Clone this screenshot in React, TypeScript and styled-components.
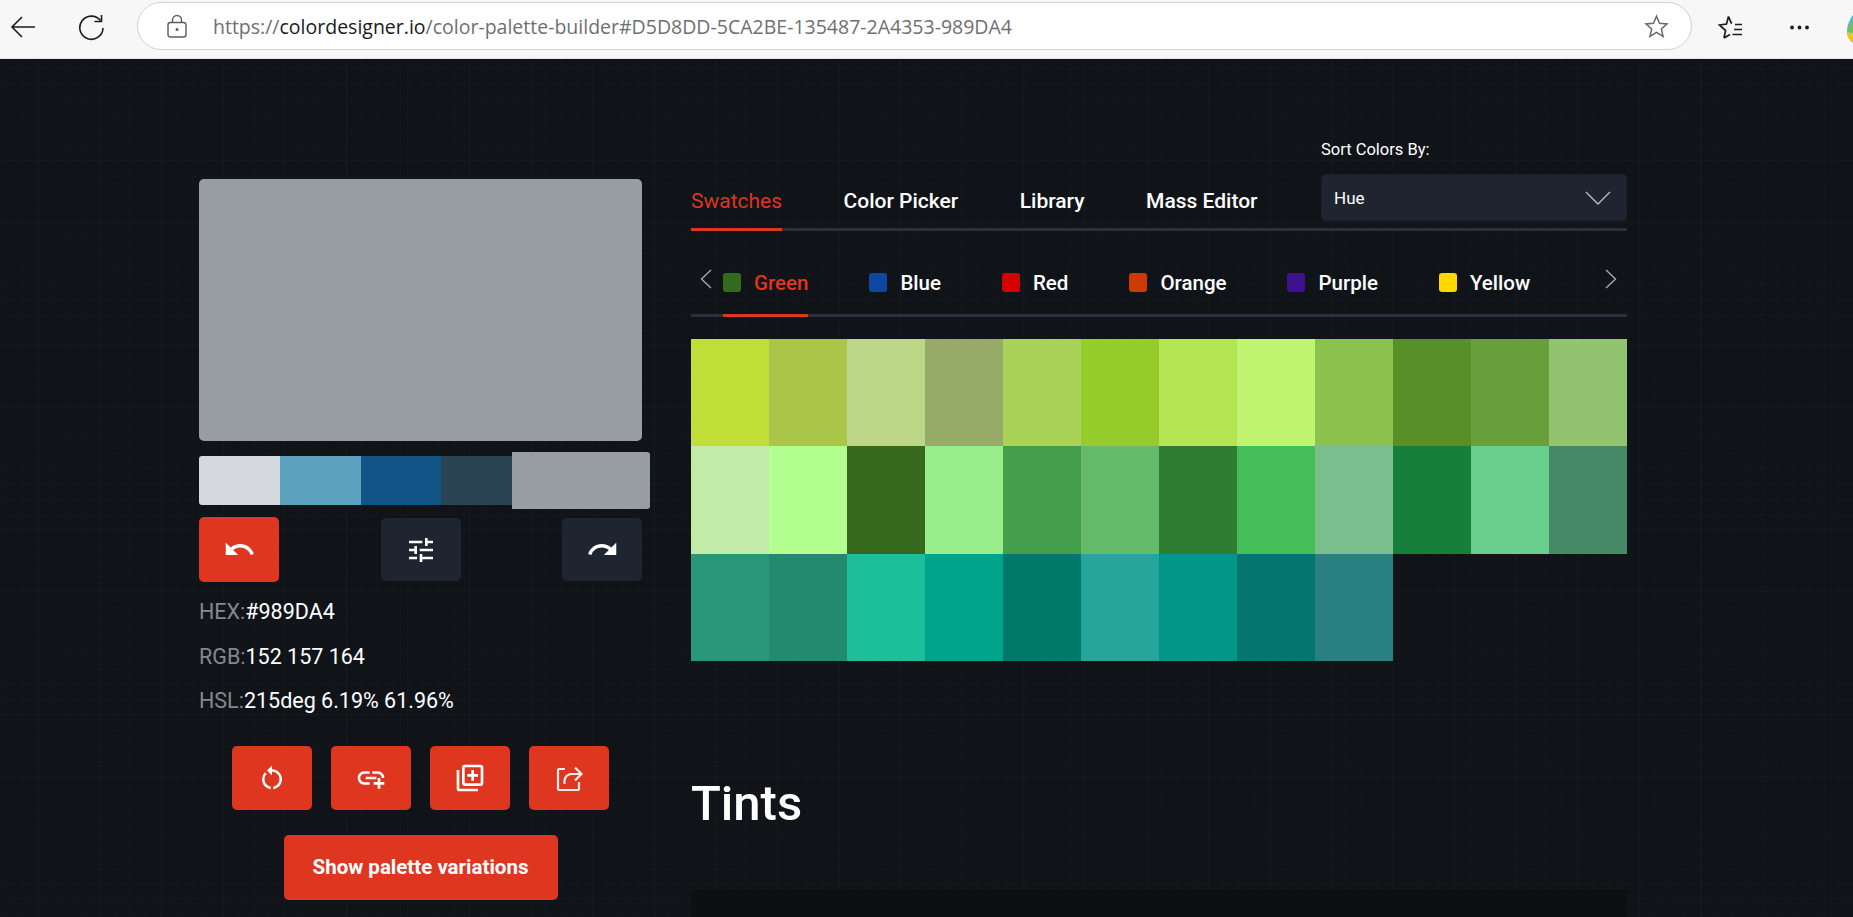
import React from 'react';
import styled, { createGlobalStyle } from 'styled-components';
import { MdUndo, MdRedo, MdTune, MdRestartAlt, MdAddLink, MdOutlineLibraryAdd } from 'react-icons/md';

const GlobalStyle = createGlobalStyle`
  html, body {
    margin: 0;
    padding: 0;
    height: 917px;
    overflow: hidden;
    background: #101419;
    font-family: Roboto, "Liberation Sans", sans-serif;
  }
`;

const Toolbar = styled.div`
  height: 59px;
  box-sizing: border-box;
  background: #f7f7f7;
  border-bottom: 1px solid #e4e4e4;
  display: flex;
  align-items: flex-start;
  overflow: hidden;
`;

const NavIcon = styled.svg<{ $left: number; $right: number }>`
  flex: none;
  margin: 14px ${p => p.$right}px 0 ${p => p.$left}px;
  fill: none;
  stroke: #1c1c1c;
`;

const AddressBar = styled.div`
  flex: none;
  width: 1555px;
  height: 48px;
  box-sizing: border-box;
  margin: 2px 25px 0 32px;
  padding: 0 22px 0 29px;
  display: flex;
  align-items: center;
  background: #fff;
  border: 1.5px solid #d2d2d2;
  border-radius: 24px;
`;

const LockIcon = styled.svg`
  flex: none;
  margin-right: 26px;
  fill: none;
  stroke: #5c5c5c;
`;

const Url = styled.div`
  flex: 1;
  font-family: "Open Sans", "Liberation Sans", sans-serif;
  font-size: 19.5px;
  color: #6f6f6f;
  white-space: nowrap;
  b {
    font-weight: 400;
    color: #1a1a1a;
  }
`;

const StarIcon = styled.svg`
  flex: none;
  fill: none;
  stroke: #6a6a6a;
`;

const EdgeDrop = styled.svg`
  flex: none;
  margin: 15px 0 0 37px;
`;

const Page = styled.main`
  position: relative;
  height: 858px;
  overflow: hidden;
  box-sizing: border-box;
  padding: 78px 0 0 199px;
  display: flex;
  align-items: flex-start;
  gap: 49px;
  background-color: #101419;
  background-image:
    linear-gradient(to right, rgba(255, 255, 255, 0.012) 1px, transparent 1px),
    linear-gradient(to bottom, rgba(255, 255, 255, 0.012) 1px, transparent 1px),
    linear-gradient(to right, rgba(255, 255, 255, 0.014) 1px, transparent 1px),
    linear-gradient(to bottom, rgba(255, 255, 255, 0.014) 1px, transparent 1px);
  background-size: 15.4px 15.4px, 15.4px 15.4px, 61.6px 61.6px, 61.6px 61.6px;
  background-position: 7px -6px, 7px -6px, 38px 39px, 38px 39px;
`;

const LeftColumn = styled.section`
  flex: none;
  width: 443px;
  margin-top: 42px;
  display: flex;
  flex-direction: column;
`;

const Preview = styled.div`
  height: 262px;
  background: #989da4;
  border-radius: 5px;
`;

const Strip = styled.div`
  margin-top: 15px;
  height: 49px;
  display: grid;
  grid-template-columns: 81px 81px 80px 71px 138px;
`;

const StripColor = styled.div<{ $color: string; $selected?: boolean }>`
  background: ${p => p.$color};
  margin: ${p => (p.$selected ? '-4px 0' : '0')};
  border-radius: ${p => (p.$selected ? '0 3px 3px 0' : '0')};
  &:first-child {
    border-radius: 3px 0 0 3px;
  }
`;

const ControlRow = styled.div`
  margin-top: 12px;
  height: 65px;
  display: flex;
  justify-content: space-between;
  align-items: center;
`;

const ControlButton = styled.button<{ $active?: boolean }>`
  width: 80px;
  height: ${p => (p.$active ? 65 : 63)}px;
  padding: 0;
  border: 0;
  border-radius: 5px;
  display: flex;
  align-items: center;
  justify-content: center;
  color: #fff;
  background: ${p => (p.$active ? '#df3620' : '#1e2530')};
`;

const Stats = styled.div`
  margin-top: 8px;
`;

const StatRow = styled.div`
  height: 44.5px;
  line-height: 44.5px;
  font-size: 21.5px;
  color: #fff;
  white-space: nowrap;
  span {
    color: #85888e;
  }
`;

const ActionRow = styled.div`
  margin-top: 22px;
  display: flex;
  justify-content: center;
  gap: 18.5px;
`;

const ActionButton = styled.button`
  width: 80.5px;
  height: 64px;
  padding: 0;
  border: 0;
  border-radius: 5px;
  display: flex;
  align-items: center;
  justify-content: center;
  color: #fff;
  background: #df3620;
`;

const VariationsButton = styled.button`
  align-self: center;
  margin-top: 25px;
  width: 274px;
  height: 65px;
  padding: 0;
  border: 0;
  border-radius: 5px;
  color: #fff;
  background: #df3620;
  font-family: inherit;
  font-size: 20.5px;
  font-weight: 700;
`;

const RightColumn = styled.section`
  flex: none;
  width: 936px;
  display: flex;
  flex-direction: column;
`;

const TopTabs = styled.div`
  height: 91px;
  display: flex;
  align-items: flex-end;
  border-bottom: 3px solid #2b2f3e;
`;

const TopTab = styled.div<{ $active?: boolean }>`
  position: relative;
  height: 56px;
  margin-right: 61.5px;
  box-sizing: border-box;
  padding-top: 17px;
  font-size: 21px;
  line-height: 25px;
  font-weight: ${p => (p.$active ? 400 : 500)};
  color: ${p => (p.$active ? '#df3620' : '#fff')};
  white-space: nowrap;
  &::after {
    content: '';
    display: ${p => (p.$active ? 'block' : 'none')};
    position: absolute;
    left: 0;
    right: 0;
    bottom: -3px;
    height: 3px;
    background: #df3620;
  }
`;

const SortBox = styled.div`
  margin-left: auto;
  width: 306px;
  margin-bottom: 7px;
`;

const SortLabel = styled.div`
  font-size: 16.5px;
  line-height: 20px;
  color: #fff;
  margin-bottom: 14px;
`;

const SortSelect = styled.div`
  height: 47px;
  box-sizing: border-box;
  padding: 0 15px 0 12px;
  display: flex;
  align-items: center;
  justify-content: space-between;
  background: #1f2430;
  border: 1px solid #1a1f29;
  border-radius: 4px;
  font-size: 17px;
  color: #fff;
  svg {
    fill: none;
    stroke: #b9bcc2;
  }
`;

const ColorTabs = styled.div`
  margin-top: 0;
  height: 83px;
  display: flex;
  align-items: flex-end;
  border-bottom: 3px solid #2b2f3e;
`;

const ScrollArrow = styled.svg<{ $side: 'left' | 'right' }>`
  flex: none;
  align-self: flex-start;
  margin: 38px ${p => (p.$side === 'left' ? '11px' : '10px')} 0 ${p => (p.$side === 'left' ? '9px' : 'auto')};
  fill: none;
  stroke: #a4a7ac;
`;

const ColorTab = styled.div<{ $active?: boolean }>`
  position: relative;
  height: 43px;
  margin-right: 61px;
  display: flex;
  align-items: flex-start;
  gap: 13px;
  font-size: 20.5px;
  line-height: 24px;
  font-weight: 500;
  color: ${p => (p.$active ? '#df3620' : '#fff')};
  white-space: nowrap;
  &::after {
    content: '';
    display: ${p => (p.$active ? 'block' : 'none')};
    position: absolute;
    left: 0;
    right: 0;
    bottom: -3px;
    height: 3px;
    background: #df3620;
  }
`;

const ColorChip = styled.span<{ $color: string }>`
  flex: none;
  width: 18px;
  height: 19px;
  margin-top: 2px;
  border-radius: 3px;
  background: ${p => p.$color};
`;

const SwatchGrid = styled.div`
  margin-top: 22px;
  display: grid;
  grid-template-columns: repeat(12, 78px);
  grid-auto-rows: 107.4px;
`;

const Swatch = styled.div<{ $color: string }>`
  background: ${p => p.$color};
`;

const SectionTitle = styled.h2`
  margin: 114px 0 0;
  font-size: 49px;
  line-height: 58px;
  font-weight: 500;
  color: #fff;
`;

const TintPanel = styled.div`
  margin-top: 57px;
  height: 100px;
  background: #0d1013;
`;

const palette = [
  { color: '#d5d8dd' },
  { color: '#5ca2be' },
  { color: '#135487' },
  { color: '#2a4353' },
  { color: '#989da4', selected: true },
];

const topTabs = ['Swatches', 'Color Picker', 'Library', 'Mass Editor'];

const colorTabs = [
  { name: 'Green', color: '#346a1e' },
  { name: 'Blue', color: '#0d47a1' },
  { name: 'Red', color: '#d50000' },
  { name: 'Orange', color: '#cf3a00' },
  { name: 'Purple', color: '#3f118c' },
  { name: 'Yellow', color: '#ffd600' },
];

const swatches = [
  '#c1dd38', '#a9c649', '#bdd789', '#97ab69', '#a9d259', '#96cb2c', '#b5e552', '#c0f470', '#8bc24d', '#588f28', '#67a03a', '#92c46f',
  '#c2eba7', '#b2ff8f', '#36691e', '#97ee8b', '#439f4a', '#66bb6a', '#2e7d32', '#43be58', '#7cbf8f', '#16803a', '#69ce8e', '#468967',
  '#2a9878', '#238a6e', '#1dbf9a', '#00a48a', '#00796b', '#26a69a', '#009688', '#04756f', '#2a7f80',
];

const STAR = 'M12.5 2.2l3 7.1 7.6.6-5.8 5 1.8 7.5-6.6-4-6.6 4 1.8-7.5-5.8-5 7.6-.6z';

export default function App() {
  return (
    <>
      <GlobalStyle />
      <Toolbar>
        <NavIcon $left={10} $right={42} width="26" height="26" viewBox="0 0 26 26" strokeWidth="1.6">
          <path d="M25 13H2M12 3L2 13l10 10" />
        </NavIcon>
        <NavIcon $left={0} $right={0} width="27" height="27" viewBox="0 0 27 27" strokeWidth="1.6">
          <path d="M22.5 6.5A11.6 11.6 0 1 0 25 14" />
          <path d="M23.5 1v6.5H16.5" />
        </NavIcon>
        <AddressBar>
          <LockIcon width="20" height="24" viewBox="0 0 20 24" strokeWidth="1.4">
            <rect x="1" y="8.5" width="18" height="14.5" rx="2.5" />
            <path d="M5.5 8.5V6a4.5 4.5 0 0 1 9 0v2.5" />
            <circle cx="10" cy="15.5" r="0.8" fill="#5c5c5c" />
          </LockIcon>
          <Url>
            https://<b>colordesigner.io</b>/color-palette-builder#D5D8DD-5CA2BE-135487-2A4353-989DA4
          </Url>
          <StarIcon width="25" height="25" viewBox="0 0 25 25" strokeWidth="1.5">
            <path d={STAR} />
          </StarIcon>
        </AddressBar>
        <NavIcon $left={0} $right={45} width="27" height="27" viewBox="0 0 27 27" strokeWidth="1.7">
          <path d="M11.5 2.5l2.7 6.4 1 .1M7 24l1.6-7.5L2.5 11l7-1 2-7.5M7 24l6-3.5" />
          <path d="M18 10.5h7M17 15.5h8M15.5 20.5h9.5" />
        </NavIcon>
        <NavIcon $left={0} $right={0} width="21" height="27" viewBox="0 0 21 27" strokeWidth="0">
          <circle cx="3" cy="13.5" r="1.9" fill="#1c1c1c" />
          <circle cx="10.5" cy="13.5" r="1.9" fill="#1c1c1c" />
          <circle cx="18" cy="13.5" r="1.9" fill="#1c1c1c" />
        </NavIcon>
        <EdgeDrop width="6" height="28" viewBox="0 0 6 28">
          <path d="M6 0C3 4 0 10 0 16c0 5 2 9 6 12z" fill="#4fb7d8" />
          <path d="M6 6C3 9 1 13 1 16h5z" fill="#7ac143" />
          <path d="M0 17c0 4 2 8 6 11V18z" fill="#f0c419" />
        </EdgeDrop>
      </Toolbar>
      <Page>
        <LeftColumn>
          <Preview />
          <Strip>
            {palette.map(item => (
              <StripColor key={item.color} $color={item.color} $selected={item.selected} />
            ))}
          </Strip>
          <ControlRow>
            <ControlButton $active><MdUndo size={33} /></ControlButton>
            <ControlButton><MdTune size={32} /></ControlButton>
            <ControlButton><MdRedo size={33} /></ControlButton>
          </ControlRow>
          <Stats>
            <StatRow><span>HEX:</span>#989DA4</StatRow>
            <StatRow><span>RGB:</span>152 157 164</StatRow>
            <StatRow><span>HSL:</span>215deg 6.19% 61.96%</StatRow>
          </Stats>
          <ActionRow>
            <ActionButton><MdRestartAlt size={30} /></ActionButton>
            <ActionButton><MdAddLink size={32} /></ActionButton>
            <ActionButton><MdOutlineLibraryAdd size={32} /></ActionButton>
            <ActionButton>
              <svg width="28" height="28" viewBox="0 0 28 28" fill="none" stroke="#eee" strokeWidth="2.2">
                <path d="M10 5H4.2A1.2 1.2 0 0 0 3 6.2v18.6A1.2 1.2 0 0 0 4.2 26h18.6a1.2 1.2 0 0 0 1.2-1.2V18" />
                <path d="M9.5 20v-3a7 7 0 0 1 7-7H26M20 3.5L26.5 10 20 16.5" />
              </svg>
            </ActionButton>
          </ActionRow>
          <VariationsButton>Show palette variations</VariationsButton>
        </LeftColumn>
        <RightColumn>
          <TopTabs>
            {topTabs.map((tab, idx) => (
              <TopTab key={tab} $active={idx === 0}>{tab}</TopTab>
            ))}
            <SortBox>
              <SortLabel>Sort Colors By:</SortLabel>
              <SortSelect>
                Hue
                <svg width="26" height="14" viewBox="0 0 26 14" strokeWidth="1.4">
                  <path d="M1 1l12 12L25 1" />
                </svg>
              </SortSelect>
            </SortBox>
          </TopTabs>
          <ColorTabs>
            <ScrollArrow $side="left" width="12" height="20" viewBox="0 0 12 20" strokeWidth="1.4">
              <path d="M11 1L1.5 10 11 19" />
            </ScrollArrow>
            {colorTabs.map((tab, idx) => (
              <ColorTab key={tab.name} $active={idx === 0}>
                <ColorChip $color={tab.color} />
                {tab.name}
              </ColorTab>
            ))}
            <ScrollArrow $side="right" width="12" height="20" viewBox="0 0 12 20" strokeWidth="1.4">
              <path d="M1 1l9.5 9L1 19" />
            </ScrollArrow>
          </ColorTabs>
          <SwatchGrid>
            {swatches.map((color, idx) => (
              <Swatch key={idx} $color={color} />
            ))}
          </SwatchGrid>
          <SectionTitle>Tints</SectionTitle>
          <TintPanel />
        </RightColumn>
      </Page>
    </>
  );
}
